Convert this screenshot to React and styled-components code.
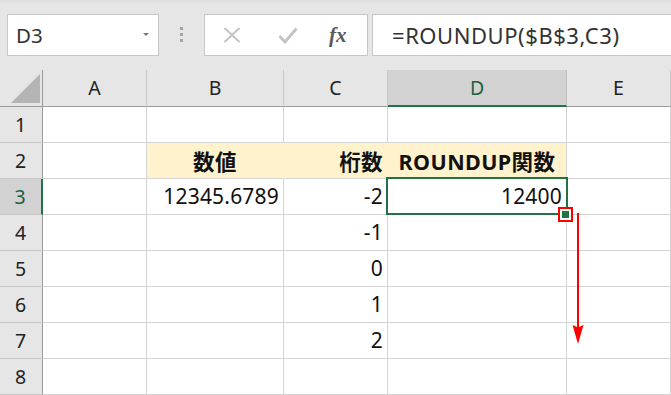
import React from "react";
import styled, { createGlobalStyle } from "styled-components";

const GlobalStyle = createGlobalStyle`
  html, body { margin: 0; padding: 0; background: #ffffff; overflow: hidden; }
  body { font-family: "Noto Sans", "Noto Sans CJK JP", sans-serif; }
  * { box-sizing: border-box; }
`;

const FONT = `"Noto Sans", "Noto Sans CJK JP", sans-serif`;

const Page = styled.div`
  width: 671px;
  height: 395px;
  overflow: hidden;
  display: flex;
  flex-direction: column;
  background: #e6e6e6;
`;

const Toolbar = styled.div`
  height: 70px;
  display: flex;
  align-items: flex-start;
  padding: 14px 0 0 7px;
  background: linear-gradient(#dcdcdc 0px, #e6e6e6 4px);
`;

const NameBox = styled.div`
  width: 152px;
  height: 42px;
  background: #fff;
  border: 1px solid #c6c6c6;
  display: flex;
  align-items: center;
  justify-content: space-between;
  padding: 0 9px 0 8px;
  font-family: ${FONT};
  font-size: 20.5px;
  color: #333;
`;

const Caret = styled.span`
  width: 0;
  height: 0;
  border-left: 3.5px solid transparent;
  border-right: 3.5px solid transparent;
  border-top: 3.5px solid #777;
  margin-bottom: 2px;
`;

const Grip = styled.div`
  width: 45px;
  height: 42px;
  display: flex;
  flex-direction: column;
  align-items: center;
  justify-content: center;
  gap: 3px;
  padding-bottom: 2px;
  span {
    width: 3px;
    height: 3px;
    background: #a6a6a6;
  }
`;

const ButtonBox = styled.div`
  width: 164px;
  height: 42px;
  background: #fff;
  border: 1px solid #c6c6c6;
  display: flex;
  align-items: center;
  padding-left: 18px;
`;

const ToolButton = styled.div`
  width: ${(p) => p.$w}px;
  height: 40px;
  display: flex;
  align-items: center;
  justify-content: flex-start;
`;

const Fx = styled.span`
  font-family: "Liberation Serif", "DejaVu Serif", serif;
  font-style: italic;
  font-weight: bold;
  font-size: 21px;
  color: #5a5a5a;
  letter-spacing: 0px;
  margin-left: -1px;
  margin-top: 1px;
`;

const FormulaBox = styled.div`
  margin-left: 4px;
  flex: 1;
  height: 42px;
  background: #fff;
  border: 1px solid #c6c6c6;
  border-right: none;
  display: flex;
  align-items: center;
  padding-left: 19px;
  font-family: ${FONT};
  font-size: 22px;
  letter-spacing: 0.55px;
  color: #333;
  white-space: nowrap;
`;

const COLS = [43, 104, 137, 104, 179, 104];

const Grid = styled.div`
  position: relative;
  display: grid;
  grid-template-columns: ${COLS.map((c) => c + "px").join(" ")};
  grid-template-rows: 37px repeat(8, 36px);
  background: #fff;
`;

const Cell = styled.div`
  position: relative;
  border-right: 1px solid #d4d4d4;
  border-bottom: 1px solid #d4d4d4;
  display: flex;
  align-items: center;
  justify-content: ${(p) => (p.$align === "right" ? "flex-end" : p.$align === "center" ? "center" : "flex-start")};
  padding: 0 4px 1px 4px;
  font-family: ${FONT};
  font-size: ${(p) => (p.$bold ? "21.5px" : "21px")};
  font-weight: ${(p) => (p.$bold ? 700 : 400)};
  letter-spacing: ${(p) => (p.$bold ? "0.4px" : "0.2px")};
  color: #111;
  background: ${(p) => (p.$fill ? "#fff2cc" : "#fff")};
  white-space: nowrap;
  ${(p) => (p.$fill && p.$joinRight ? "border-right-color: #fff2cc;" : "")}
`;

const ColHead = styled.div`
  background: ${(p) => (p.$active ? "#d2d2d2" : "#e6e6e6")};
  border-right: 1px solid ${(p) => (p.$active ? "#bdbdbd" : "#c8c8c8")};
  border-bottom: ${(p) => (p.$active ? "2px solid #217346" : "1px solid #9b9b9b")};
  display: flex;
  align-items: center;
  justify-content: center;
  padding-bottom: 1px;
  font-family: ${FONT};
  font-size: 19.5px;
  color: ${(p) => (p.$active ? "#1f5f3f" : "#222")};
`;

const Corner = styled.div`
  background: #e6e6e6;
  border-right: 1px solid #9b9b9b;
  border-bottom: 1px solid #9b9b9b;
  display: flex;
  align-items: flex-end;
  justify-content: flex-end;
  padding: 0 2px 3px 0;
`;

const Triangle = styled.span`
  width: 0;
  height: 0;
  border-left: 29px solid transparent;
  border-bottom: 29px solid #b4b4b4;
`;

const RowHead = styled.div`
  background: ${(p) => (p.$active ? "#d2d2d2" : "#e6e6e6")};
  border-right: ${(p) => (p.$active ? "2px solid #217346" : "1px solid #9b9b9b")};
  border-bottom: 1px solid #c8c8c8;
  display: flex;
  align-items: center;
  justify-content: center;
  padding: 0 1px 1px 0;
  font-family: ${FONT};
  font-size: 19.5px;
  color: ${(p) => (p.$active ? "#1f5f3f" : "#222")};
`;

const Selection = styled.div`
  position: absolute;
  z-index: 2;
  left: -2px;
  top: -2px;
  right: -2px;
  bottom: -1px;
  border: 2px solid #217346;
  pointer-events: none;
`;

const HandleMark = styled.div`
  position: absolute;
  z-index: 3;
  right: -7px;
  bottom: -8px;
  width: 15px;
  height: 15px;
  border: 2px solid #ff0000;
  background: #fff;
  display: flex;
  align-items: center;
  justify-content: center;
  span {
    width: 7px;
    height: 7px;
    background: #217346;
  }
`;

const Arrow = styled.svg`
  position: absolute;
  z-index: 3;
  left: 571px;
  top: 143px;
  overflow: visible;
`;

const columns = ["A", "B", "C", "D", "E"];

const rows = [
  { n: 1, cells: [null, null, null, null, null] },
  {
    n: 2,
    cells: [
      null,
      { t: "数値", align: "center", bold: true, fill: true, join: true },
      { t: "桁数", align: "right", bold: true, fill: true, join: true },
      { t: "ROUNDUP関数", align: "center", bold: true, fill: true },
      null,
    ],
  },
  {
    n: 3,
    cells: [
      null,
      { t: "12345.6789", align: "right" },
      { t: "-2", align: "right" },
      { t: "12400", align: "right", selected: true },
      null,
    ],
  },
  { n: 4, cells: [null, null, { t: "-1", align: "right" }, null, null] },
  { n: 5, cells: [null, null, { t: "0", align: "right" }, null, null] },
  { n: 6, cells: [null, null, { t: "1", align: "right" }, null, null] },
  { n: 7, cells: [null, null, { t: "2", align: "right" }, null, null] },
  { n: 8, cells: [null, null, null, null, null] },
];

export default function App() {
  return (
    <>
      <GlobalStyle />
      <Page>
        <Toolbar>
          <NameBox>
            <span>D3</span>
            <Caret />
          </NameBox>
          <Grip>
            <span />
            <span />
            <span />
          </Grip>
          <ButtonBox>
            <ToolButton $w={55}>
              <svg width="18" height="16" viewBox="0 0 18 16">
                <path d="M1.5 1 L16.5 15 M16.5 1 L1.5 15" stroke="#c4c4c4" strokeWidth="2" fill="none" />
              </svg>
            </ToolButton>
            <ToolButton $w={52}>
              <svg width="20" height="17" viewBox="0 0 20 17">
                <path d="M1.5 9 L7 15 L18.5 1.5" stroke="#c4c4c4" strokeWidth="3" fill="none" />
              </svg>
            </ToolButton>
            <ToolButton $w={30}>
              <Fx>fx</Fx>
            </ToolButton>
          </ButtonBox>
          <FormulaBox>=ROUNDUP($B$3,C3)</FormulaBox>
        </Toolbar>
        <Grid>
          <Corner>
            <Triangle />
          </Corner>
          {columns.map((c) => (
            <ColHead key={c} $active={c === "D"}>
              {c}
            </ColHead>
          ))}
          {rows.map((r) => (
            <React.Fragment key={r.n}>
              <RowHead $active={r.n === 3}>{r.n}</RowHead>
              {r.cells.map((cell, i) => (
                <Cell
                  key={i}
                  $align={cell?.align}
                  $bold={cell?.bold}
                  $fill={cell?.fill}
                  $joinRight={cell?.join}
                >
                  {cell?.t}
                  {cell?.selected && (
                    <>
                      <Selection />
                      <HandleMark>
                        <span />
                      </HandleMark>
                    </>
                  )}
                </Cell>
              ))}
            </React.Fragment>
          ))}
          <Arrow width="14" height="132" viewBox="0 0 14 132">
            <line x1="7" y1="0" x2="7" y2="116" stroke="#ff0000" strokeWidth="2" />
            <path d="M1.5 112 L7 114.5 L12.5 112 L7 131 Z" fill="#ff0000" />
          </Arrow>
        </Grid>
      </Page>
    </>
  );
}
